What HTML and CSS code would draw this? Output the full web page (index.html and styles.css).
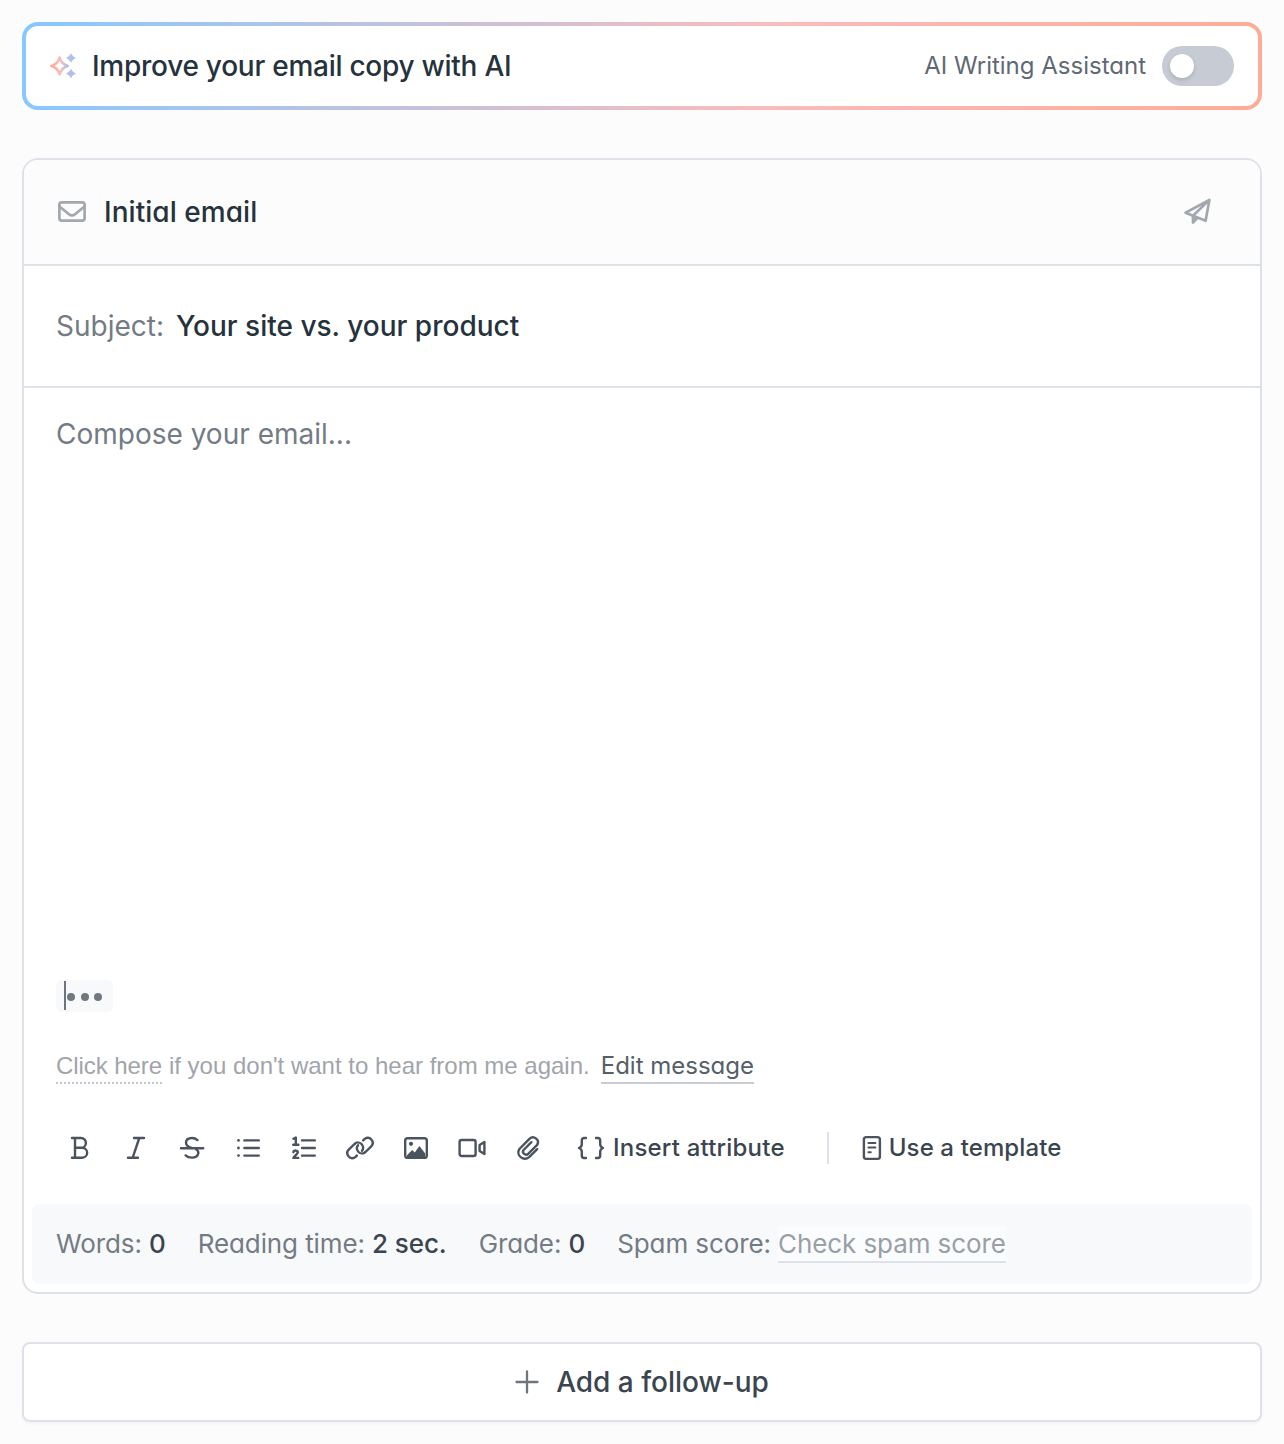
FILE: index.html
```html
<!DOCTYPE html>
<html lang="en">
<head>
    <meta charset="UTF-8">
    <meta name="viewport" content="width=device-width, initial-scale=1.0">
    <title>Email editor</title>
    <link rel="stylesheet" href="styles.css">
</head>
<body>

<div class="ai-banner">
    <svg class="ai-icon" width="28" height="28" viewBox="0 0 28 28">
        <defs>
            <linearGradient id="spark" x1="0" y1="0" x2="1" y2="0">
                <stop offset="0" stop-color="#ffad98"/>
                <stop offset="0.6" stop-color="#f7bcbc"/>
                <stop offset="1" stop-color="#a9c0ee"/>
            </linearGradient>
        </defs>
        <path d="M9.6 5.6Q11.4 12 17.8 13.9Q11.4 15.8 9.6 22.2Q7.8 15.8 1.4 13.9Q7.8 12 9.6 5.6Z" fill="none" stroke="url(#spark)" stroke-width="2.6" stroke-linejoin="round"/>
        <path d="M21 1Q22.3 4.7 26.3 6Q22.3 7.3 21 11Q19.7 7.3 15.7 6Q19.7 4.7 21 1ZM21 16.5Q22.3 20.2 26.3 21.5Q22.3 22.8 21 26.5Q19.7 22.8 15.7 21.5Q19.7 20.2 21 16.5Z" fill="#adc1ec"/>
    </svg>
    <span class="ai-title">Improve your email copy with AI</span>
    <span class="ai-label">AI Writing Assistant</span>
    <span class="toggle"><span class="toggle-knob"></span></span>
</div>

<div class="card">
    <div class="card-header">
        <svg width="32" height="32" viewBox="0 0 32 32" fill="none" stroke="#a3a8ae" stroke-width="2.7" stroke-linejoin="round">
            <rect x="3.4" y="6.3" width="25.2" height="18.4" rx="2.4"/>
            <path d="M3.5 10.5L13 18.2Q16 20.6 19 18.2L28.5 10.5"/>
        </svg>
        <span class="card-title">Initial email</span>
        <svg class="send-icon" width="32" height="32" viewBox="0 0 32 32" fill="none" stroke="#a3a8b0" stroke-width="2.7" stroke-linejoin="round">
            <path d="M28.4 3.9L4.6 16.8L12 19.8L24.6 24.8ZM28.4 3.9L12 19.8"/>
            <path d="M12 20V26.6L16.2 22Z" fill="#a3a8b0"/>
        </svg>
    </div>

    <div class="subject">
        <span class="subject-label">Subject:</span>
        <span class="subject-text">Your site vs. your product</span>
    </div>

    <div class="editor">
        <div class="placeholder">Compose your email...</div>
        <div class="signature">
            <span class="caret"></span>
            <span class="dot"></span><span class="dot"></span><span class="dot"></span>
        </div>
        <div class="unsubscribe">
            <span class="unsub-link">Click here</span>
            <span class="unsub-text">if you don't want to hear from me again.</span>
            <span class="edit-link">Edit message</span>
        </div>
    </div>

    <div class="toolbar">
        <svg class="tool" viewBox="0 0 32 32">
            <path d="M8 6H17a4.9 4.9 0 0 1 0 9.8H11M17 15.8h1.2a4.9 4.9 0 0 1 0 9.9H8M11 6V25.7"/>
        </svg>
        <svg class="tool" viewBox="0 0 32 32">
            <path d="M14 6H24M8 25.7H18M19.3 6L12.7 25.7"/>
        </svg>
        <svg class="tool" viewBox="0 0 32 32">
            <path d="M21.5 8.1C20 6.7 18.3 6 16 6C12.2 6 10 8 10 10.8C10 13.4 12 14.8 15.5 16M5 16.2H27.2M20 17.2C22 18.4 22.6 19.8 22.3 21.3C21.8 24.1 19.2 25.6 16 25.6C13.2 25.6 11 24.8 9.6 23.4"/>
        </svg>
        <svg class="tool" viewBox="0 0 32 32">
            <path d="M12.4 8.4H26.8M12.4 16H26.8M12.4 23.6H26.8"/>
            <path d="M6.5 8.4h.01M6.5 16h.01M6.5 23.6h.01" stroke-width="2.8"/>
        </svg>
        <svg class="tool" viewBox="0 0 32 32">
            <path d="M14 8.4H26.8M14 16H26.8M14 23.6H26.8"/>
            <path d="M5.4 6.8L7.8 5.6V12.6M5.2 12.7H10.4M5.4 20.2C5.7 18 9.9 18 9.8 20.4C9.7 22 7 23.2 5.4 25.9H10.2"/>
        </svg>
        <svg class="tool" viewBox="0 0 32 32">
            <path d="M12.8 23.6L11.6 24.8C9.4 26.9 6.5 26.5 4.7 24.5C2.8 22.3 2.7 19.6 5 17.4L10.5 12C12.7 10 15.7 10.2 17.5 12C19.3 14 19.5 16.8 18 18.8"/>
            <path d="M19.2 8.4L20.4 7.2C22.6 5.1 25.5 5.5 27.3 7.5C29.2 9.7 29.3 12.4 27 14.6L21.5 20C19.3 22 16.3 21.8 14.5 20C12.7 18 12.5 15.2 14 13.2"/>
        </svg>
        <svg class="tool" viewBox="0 0 32 32">
            <rect x="5.2" y="6.2" width="21.6" height="19.6" rx="2.4"/>
            <circle cx="11" cy="11.8" r="2.1" class="solid"/>
            <path d="M7 25V23.2L12.2 18L14.8 20.6L19.4 14L25.2 21.5V25Z" class="solid"/>
        </svg>
        <svg class="tool" viewBox="0 0 32 32">
            <rect x="3.6" y="8" width="16" height="16" rx="2"/>
            <path d="M23.6 13L28.4 10V22L23.6 19Z"/>
        </svg>
        <svg class="tool" viewBox="0 0 32 32">
            <path d="M25.2 17.2L17.4 24.8C11.6 29.8 3.4 23.4 7.4 17L17.4 6.8C21.8 2.9 28.5 8 24.9 13.2L16.4 21.7C13.4 24.1 9.5 21 11.6 18L19.4 10.2"/>
        </svg>
        <span class="tool-button">
            <svg class="tool" viewBox="0 0 32 32">
                <path d="M11 6H9.2Q6.8 6 6.8 8.6V12.2Q6.8 14.8 4 16Q6.8 17.2 6.8 19.8V23.4Q6.8 26 9.2 26H11M21 6H22.8Q25.2 6 25.2 8.6V12.2Q25.2 14.8 28 16Q25.2 17.2 25.2 19.8V23.4Q25.2 26 22.8 26H21"/>
            </svg>
            <span class="insert-text">Insert attribute</span>
        </span>
        <span class="divider"></span>
        <span class="tool-button">
            <svg class="template-icon" viewBox="0 0 20 32">
                <rect x="1.9" y="5.1" width="16" height="21.8" rx="2.4"/>
                <path d="M6.4 11H13.4M6.4 15.6H13.4M6.4 20.2H8.8" stroke-width="2"/>
            </svg>
            <span class="template-text">Use a template</span>
        </span>
    </div>

    <div class="stats">
        <span class="stat">Words: <b>0</b></span>
        <span class="stat">Reading time: <b>2 sec.</b></span>
        <span class="stat">Grade: <b>0</b></span>
        <span class="stat">Spam score: <span class="spam-link">Check spam score</span></span>
    </div>
</div>

<div class="follow-up">
    <svg width="24" height="24" viewBox="0 0 24 24" fill="none" stroke="#6d757f" stroke-width="2.3" stroke-linecap="round">
        <path d="M12 1.5V22.5M1.5 12H22.5"/>
    </svg>
    <span class="follow-text">Add a follow-up</span>
</div>

</body>
</html>
```
FILE: styles.css
```css
* {
    box-sizing: border-box;
}

body {
    margin: 0;
    padding: 22px;
    background: #fcfcfc;
    font-family: Inter, "Liberation Sans", sans-serif;
    font-size: 28px;
    line-height: 40px;
    color: #26323c;
    white-space: nowrap;
}

svg {
    display: block;
    flex: none;
}

.ai-banner {
    display: flex;
    align-items: center;
    height: 88px;
    padding: 0 24px;
    border: 4px solid transparent;
    border-radius: 16px;
    background: linear-gradient(#fff, #fff) padding-box,
        linear-gradient(100deg, #86c8ff 0%, #f9bcbc 60%, #ffab95 100%) border-box;
}

.ai-title {
    margin-left: 14px;
    font-weight: 500;
    letter-spacing: -0.26px;
}

.ai-label {
    margin-left: auto;
    font-size: 24px;
    color: #5f6973;
    font-feature-settings: "cv11";
}

.toggle {
    width: 72px;
    height: 40px;
    margin-left: 16px;
    padding: 8px;
    border-radius: 20px;
    background: #c7cbd3;
}

.toggle-knob {
    display: block;
    width: 24px;
    height: 24px;
    border-radius: 50%;
    background: #fff;
    box-shadow: 0 2px 4px rgba(0, 0, 0, .15);
}

.card {
    height: 1136px;
    margin-top: 48px;
    border: 2px solid #dee2e8;
    border-radius: 16px;
    background: #fff;
    display: flex;
    flex-direction: column;
}

.card-header {
    display: flex;
    align-items: center;
    height: 106px;
    padding: 0 47px 0 32px;
    border-bottom: 2px solid #dee2e8;
    border-radius: 14px 14px 0 0;
    background: #fcfcfc;
}

.card-title {
    margin-left: 16px;
    font-weight: 500;
    letter-spacing: 0.05px;
    font-feature-settings: "cv11";
}

.send-icon {
    margin-left: auto;
}

.subject {
    display: flex;
    align-items: center;
    height: 122px;
    padding: 0 32px;
    border-bottom: 2px solid #dee2e8;
}

.subject-label {
    color: #737b84;
}

.subject-text {
    margin-left: 12px;
    font-weight: 500;
}

.editor {
    height: 720px;
    padding: 26px 32px 0;
}

.placeholder {
    height: 566px;
    color: #737b84;
}

.signature {
    display: flex;
    align-items: center;
    width: 57px;
    height: 32px;
    padding-left: 8px;
    border-radius: 6px;
    background: #f8f9fb;
}

.caret {
    width: 2px;
    height: 29px;
    margin-right: 1px;
    margin-bottom: 1px;
    background: #6c7480;
}

.dot {
    width: 8px;
    height: 8px;
    margin-top: 2px;
    margin-right: 5.5px;
    border-radius: 50%;
    background: #707981;
}

.unsubscribe {
    display: flex;
    height: 36px;
    margin-top: 36px;
    font-family: "Liberation Sans", Arial, sans-serif;
    font-size: 24px;
    line-height: 36px;
    color: #a0a5ab;
}

.unsub-link {
    border-bottom: 2px dotted #c4c8ce;
    letter-spacing: -0.08px;
}

.unsub-text {
    margin-left: 7px;
}

.edit-link {
    margin-left: 11px;
    border-bottom: 2px solid #c9cdd3;
    font-family: Inter, sans-serif;
    color: #555f6a;
    font-feature-settings: "cv11";
}

.toolbar {
    display: flex;
    align-items: center;
    gap: 24px;
    height: 80px;
    padding: 0 40px;
}

.tool,
.template-icon {
    width: 32px;
    height: 32px;
    fill: none;
    stroke: #4a535e;
    stroke-width: 2.4;
    stroke-linecap: round;
    stroke-linejoin: round;
}

.template-icon {
    width: 20px;
}

.solid {
    fill: #4a535e;
    stroke: none;
}

.tool-button {
    display: flex;
    align-items: center;
    font-size: 24px;
    font-weight: 500;
    color: #3b4550;
}

.tool-button:first-of-type {
    margin-left: 7px;
}

.insert-text {
    margin-left: 6px;
    letter-spacing: 0.2px;
}

.template-text {
    margin-left: 7px;
    letter-spacing: 0.12px;
}

.divider {
    width: 2px;
    height: 32px;
    margin-left: 18px;
    margin-right: 9px;
    background: #dee2e8;
}

.stats {
    display: flex;
    align-items: center;
    gap: 32px;
    height: 80px;
    margin: 16px 8px 8px;
    padding: 0 24px;
    border-radius: 8px;
    background: #f8f9fb;
    font-size: 26px;
    letter-spacing: -0.1px;
    color: #737b84;
    font-feature-settings: "cv11";
}

.stat b {
    font-weight: 500;
    color: #3b4550;
}

.spam-link {
    display: inline-block;
    height: 37px;
    line-height: 36px;
    border-bottom: 2px solid #dee2e8;
    border-radius: 4px 4px 0 0;
    background: #fbfcfd;
    color: #9a9fa6;
    font-feature-settings: normal;
}

.follow-up {
    display: flex;
    align-items: center;
    justify-content: center;
    height: 80px;
    margin-top: 48px;
    border: 2px solid #dee2e8;
    border-radius: 8px;
    background: #fff;
    box-shadow: 0 2px 3px rgba(0, 0, 0, .04);
}

.follow-text {
    margin-left: 17px;
    font-weight: 500;
    color: #3b4550;
}
```
